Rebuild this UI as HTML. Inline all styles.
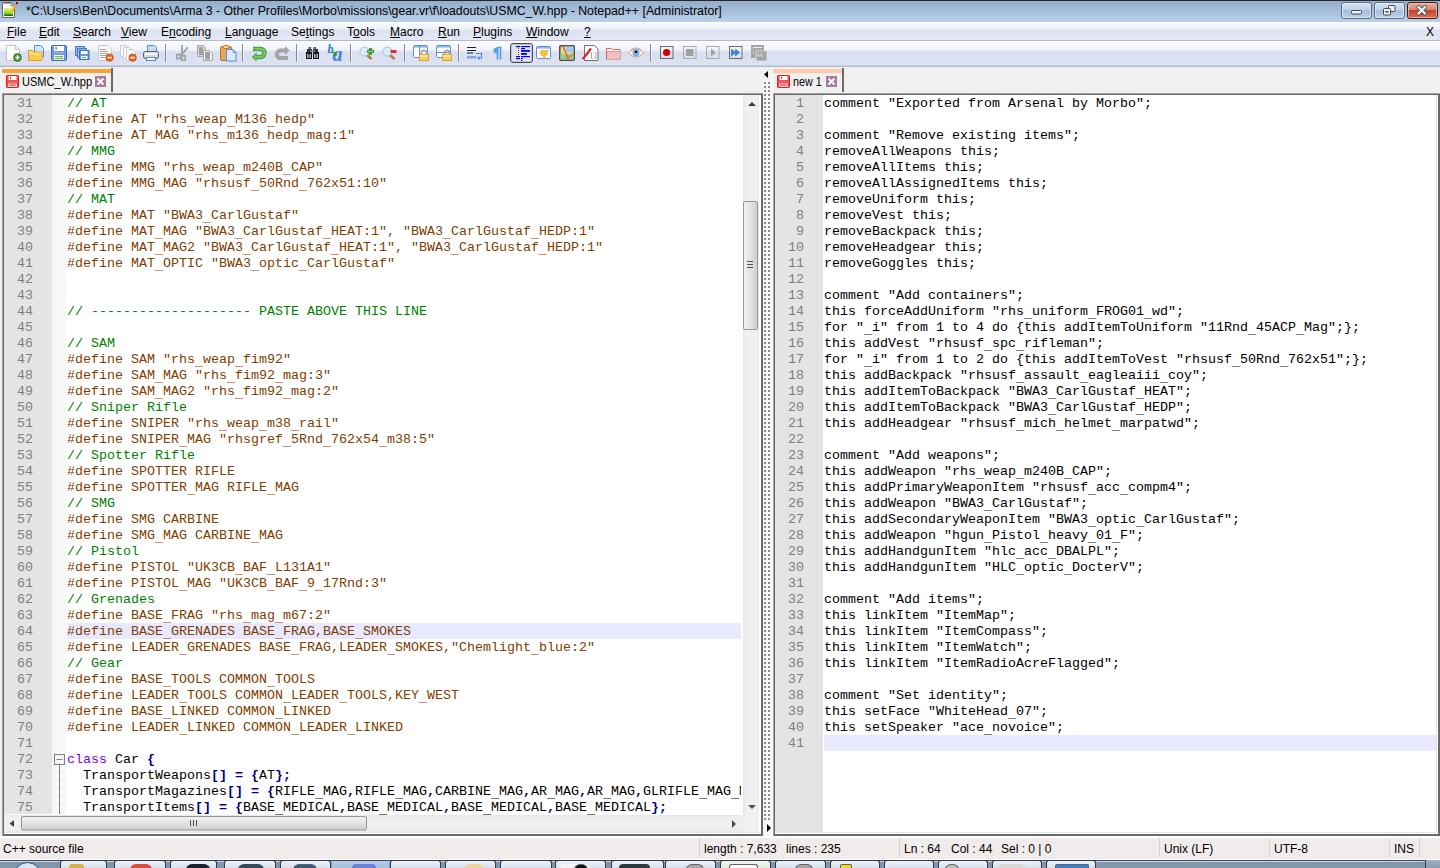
<!DOCTYPE html>
<html><head><meta charset="utf-8"><style>
*{margin:0;padding:0;box-sizing:border-box}
html,body{width:1440px;height:868px;overflow:hidden;background:#f0f0f0;position:relative;font-family:"Liberation Sans",sans-serif}
.a{position:absolute}
#title{left:0;top:0;width:1440px;height:22px;background:linear-gradient(#262626 0,#262626 1px,#93adca 1px,#b9d0e8 22px)}
#ttext{left:26px;top:4px;font-size:12.3px;color:#000;white-space:nowrap}
#menubar{left:0;top:22px;width:1440px;height:19px;background:linear-gradient(#fbfcfe 0,#eef1f9 7px,#dde2f1 8px,#e4e8f4 18px,#b4bacb 18px)}
.mi{position:absolute;top:3px;font-size:12px;color:#000;white-space:nowrap}
.mi u{text-decoration:underline;text-underline-offset:1px}
#toolbar{left:0;top:41px;width:1440px;height:26px;background:linear-gradient(#fbfcfe 0,#f1f3fa 9px,#d9dff0 11px,#dde2f2 24px,#b4bacb 25px)}
#tabbar{left:0;top:67px;width:1440px;height:28px;background:#f0f0f0}
.ln{position:absolute;width:29px;text-align:right;font-family:"Liberation Mono",monospace;font-size:13.333px;line-height:16px;height:16px;color:#808080;white-space:pre}
.tl{position:absolute;left:67px;font-family:"Liberation Mono",monospace;font-size:13.333px;line-height:16px;height:16px;white-space:pre;color:#000}
.tr{position:absolute;left:824px;font-family:"Liberation Mono",monospace;font-size:13.333px;line-height:16px;height:16px;white-space:pre;color:#000}
.u{position:relative;top:2px} .p{color:#804000} .c{color:#008000} .k{color:#8000ff} .o{color:#000080;font-weight:bold} .d{color:#000}
#status{left:0;top:836px;width:1440px;height:24px;background:linear-gradient(#fff 0,#fff 2px,#f0eceb 2px,#f0eceb 23px,#fff 23px)}
.st{position:absolute;top:6px;font-size:12px;color:#000;white-space:nowrap}
.sd{position:absolute;top:2px;width:1px;height:19px;background:#d6d2d0}
.tab{position:absolute;font-size:12px;color:#000;white-space:nowrap}
</style></head><body>
<div id="title" class="a"></div>
<div id="ttext" class="a">*C:\Users\Ben\Documents\Arma 3 - Other Profiles\Morbo\missions\gear.vr\f\loadouts\USMC_W.hpp - Notepad++ [Administrator]</div>
<div id="menubar" class="a"><div class="mi" style="left:7px"><u>F</u>ile</div>
<div class="mi" style="left:39px"><u>E</u>dit</div>
<div class="mi" style="left:73px"><u>S</u>earch</div>
<div class="mi" style="left:121px"><u>V</u>iew</div>
<div class="mi" style="left:161px">E<u>n</u>coding</div>
<div class="mi" style="left:225px"><u>L</u>anguage</div>
<div class="mi" style="left:291px">Se<u>t</u>tings</div>
<div class="mi" style="left:347px">T<u>o</u>ols</div>
<div class="mi" style="left:390px"><u>M</u>acro</div>
<div class="mi" style="left:438px"><u>R</u>un</div>
<div class="mi" style="left:473px"><u>P</u>lugins</div>
<div class="mi" style="left:526px"><u>W</u>indow</div>
<div class="mi" style="left:584px"><u>?</u></div><div class="mi" style="left:1426px">X</div></div>
<div id="toolbar" class="a"></div>
<div id="tabbar" class="a"></div>
<!-- tabs -->
<div class="a" style="left:1px;top:68px;width:111px;height:25px;background:#f0f0f0;border-left:1px solid #fff"></div>
<div class="a" style="left:2px;top:69px;width:109px;height:4px;background:#f9a330"></div>
<div class="a" style="left:111px;top:68px;width:2px;height:24px;background:#6a6a6a"></div>
<div class="tab" style="left:22px;top:75px;font-size:12.5px;transform-origin:0 0;transform:scaleX(0.885)">USMC_W.hpp</div>
<div class="a" style="left:772px;top:68px;width:72px;height:25px;background:#f0f0f0;border-left:1px solid #fff"></div>
<div class="a" style="left:773px;top:69px;width:70px;height:4px;background:#ffc8a6"></div>
<div class="a" style="left:842px;top:68px;width:2px;height:24px;background:#6a6a6a"></div>
<div class="tab" style="left:793px;top:75px;font-size:12.5px;transform-origin:0 0;transform:scaleX(0.86)">new 1</div>
<!-- left editor -->
<div class="a" style="left:2px;top:93px;width:761px;height:743px;background:#696969;border-top:1px solid #a0a0a0;border-left:1px solid #a0a0a0"></div>
<div class="a" style="left:4px;top:95px;width:757px;height:739px;background:#fff;border-right:2px solid #fff;border-bottom:2px solid #fff"></div>
<div class="a" style="left:4px;top:832px;width:756px;height:1px;background:#e3e3e3"></div>
<div class="a" style="left:4px;top:95px;width:48px;height:719px;background:#e4e4e4"></div>
<div class="a" style="left:52px;top:95px;width:14px;height:719px;background:repeating-conic-gradient(#f0f0f0 0 25%,#fff 0 50%) 0 0/2px 2px"></div>
<div class="a" style="left:67px;top:623px;width:674px;height:16px;background:#e8e8ff"></div>
<svg class="a" style="left:52px;top:750px" width="14" height="64" viewBox="52 750 14 64"><rect x="54.5" y="754.5" width="10" height="10" fill="#f4f4f4" stroke="#808080"/><path d="M56.5 759.5h6" stroke="#808080"/><path d="M59.5 765v50" stroke="#808080"/></svg>
<div style="position:absolute;left:0;top:0;width:741px;height:815px;overflow:hidden">
<div class="ln" style="top:96px;left:4px">31</div>
<div class="tl" style="top:96px"><span class="c">// AT</span></div>
<div class="ln" style="top:112px;left:4px">32</div>
<div class="tl" style="top:112px"><span class="p">#define AT "rhs<span class="u">_</span>weap<span class="u">_</span>M136<span class="u">_</span>hedp"</span></div>
<div class="ln" style="top:128px;left:4px">33</div>
<div class="tl" style="top:128px"><span class="p">#define AT<span class="u">_</span>MAG "rhs<span class="u">_</span>m136<span class="u">_</span>hedp<span class="u">_</span>mag:1"</span></div>
<div class="ln" style="top:144px;left:4px">34</div>
<div class="tl" style="top:144px"><span class="c">// MMG</span></div>
<div class="ln" style="top:160px;left:4px">35</div>
<div class="tl" style="top:160px"><span class="p">#define MMG "rhs<span class="u">_</span>weap<span class="u">_</span>m240B<span class="u">_</span>CAP"</span></div>
<div class="ln" style="top:176px;left:4px">36</div>
<div class="tl" style="top:176px"><span class="p">#define MMG<span class="u">_</span>MAG "rhsusf<span class="u">_</span>50Rnd<span class="u">_</span>762x51:10"</span></div>
<div class="ln" style="top:192px;left:4px">37</div>
<div class="tl" style="top:192px"><span class="c">// MAT</span></div>
<div class="ln" style="top:208px;left:4px">38</div>
<div class="tl" style="top:208px"><span class="p">#define MAT "BWA3<span class="u">_</span>CarlGustaf"</span></div>
<div class="ln" style="top:224px;left:4px">39</div>
<div class="tl" style="top:224px"><span class="p">#define MAT<span class="u">_</span>MAG "BWA3<span class="u">_</span>CarlGustaf<span class="u">_</span>HEAT:1", "BWA3<span class="u">_</span>CarlGustaf<span class="u">_</span>HEDP:1"</span></div>
<div class="ln" style="top:240px;left:4px">40</div>
<div class="tl" style="top:240px"><span class="p">#define MAT<span class="u">_</span>MAG2 "BWA3<span class="u">_</span>CarlGustaf<span class="u">_</span>HEAT:1", "BWA3<span class="u">_</span>CarlGustaf<span class="u">_</span>HEDP:1"</span></div>
<div class="ln" style="top:256px;left:4px">41</div>
<div class="tl" style="top:256px"><span class="p">#define MAT<span class="u">_</span>OPTIC "BWA3<span class="u">_</span>optic<span class="u">_</span>CarlGustaf"</span></div>
<div class="ln" style="top:272px;left:4px">42</div>
<div class="tl" style="top:272px"></div>
<div class="ln" style="top:288px;left:4px">43</div>
<div class="tl" style="top:288px"></div>
<div class="ln" style="top:304px;left:4px">44</div>
<div class="tl" style="top:304px"><span class="c">// -------------------- PASTE ABOVE THIS LINE</span></div>
<div class="ln" style="top:320px;left:4px">45</div>
<div class="tl" style="top:320px"></div>
<div class="ln" style="top:336px;left:4px">46</div>
<div class="tl" style="top:336px"><span class="c">// SAM</span></div>
<div class="ln" style="top:352px;left:4px">47</div>
<div class="tl" style="top:352px"><span class="p">#define SAM "rhs<span class="u">_</span>weap<span class="u">_</span>fim92"</span></div>
<div class="ln" style="top:368px;left:4px">48</div>
<div class="tl" style="top:368px"><span class="p">#define SAM<span class="u">_</span>MAG "rhs<span class="u">_</span>fim92<span class="u">_</span>mag:3"</span></div>
<div class="ln" style="top:384px;left:4px">49</div>
<div class="tl" style="top:384px"><span class="p">#define SAM<span class="u">_</span>MAG2 "rhs<span class="u">_</span>fim92<span class="u">_</span>mag:2"</span></div>
<div class="ln" style="top:400px;left:4px">50</div>
<div class="tl" style="top:400px"><span class="c">// Sniper Rifle</span></div>
<div class="ln" style="top:416px;left:4px">51</div>
<div class="tl" style="top:416px"><span class="p">#define SNIPER "rhs<span class="u">_</span>weap<span class="u">_</span>m38<span class="u">_</span>rail"</span></div>
<div class="ln" style="top:432px;left:4px">52</div>
<div class="tl" style="top:432px"><span class="p">#define SNIPER<span class="u">_</span>MAG "rhsgref<span class="u">_</span>5Rnd<span class="u">_</span>762x54<span class="u">_</span>m38:5"</span></div>
<div class="ln" style="top:448px;left:4px">53</div>
<div class="tl" style="top:448px"><span class="c">// Spotter Rifle</span></div>
<div class="ln" style="top:464px;left:4px">54</div>
<div class="tl" style="top:464px"><span class="p">#define SPOTTER RIFLE</span></div>
<div class="ln" style="top:480px;left:4px">55</div>
<div class="tl" style="top:480px"><span class="p">#define SPOTTER<span class="u">_</span>MAG RIFLE<span class="u">_</span>MAG</span></div>
<div class="ln" style="top:496px;left:4px">56</div>
<div class="tl" style="top:496px"><span class="c">// SMG</span></div>
<div class="ln" style="top:512px;left:4px">57</div>
<div class="tl" style="top:512px"><span class="p">#define SMG CARBINE</span></div>
<div class="ln" style="top:528px;left:4px">58</div>
<div class="tl" style="top:528px"><span class="p">#define SMG<span class="u">_</span>MAG CARBINE<span class="u">_</span>MAG</span></div>
<div class="ln" style="top:544px;left:4px">59</div>
<div class="tl" style="top:544px"><span class="c">// Pistol</span></div>
<div class="ln" style="top:560px;left:4px">60</div>
<div class="tl" style="top:560px"><span class="p">#define PISTOL "UK3CB<span class="u">_</span>BAF<span class="u">_</span>L131A1"</span></div>
<div class="ln" style="top:576px;left:4px">61</div>
<div class="tl" style="top:576px"><span class="p">#define PISTOL<span class="u">_</span>MAG "UK3CB<span class="u">_</span>BAF<span class="u">_</span>9<span class="u">_</span>17Rnd:3"</span></div>
<div class="ln" style="top:592px;left:4px">62</div>
<div class="tl" style="top:592px"><span class="c">// Grenades</span></div>
<div class="ln" style="top:608px;left:4px">63</div>
<div class="tl" style="top:608px"><span class="p">#define BASE<span class="u">_</span>FRAG "rhs<span class="u">_</span>mag<span class="u">_</span>m67:2"</span></div>
<div class="ln" style="top:624px;left:4px">64</div>
<div class="tl" style="top:624px"><span class="p">#define BASE<span class="u">_</span>GRENADES BASE<span class="u">_</span>FRAG,BASE<span class="u">_</span>SMOKES</span></div>
<div class="ln" style="top:640px;left:4px">65</div>
<div class="tl" style="top:640px"><span class="p">#define LEADER<span class="u">_</span>GRENADES BASE<span class="u">_</span>FRAG,LEADER<span class="u">_</span>SMOKES,"Chemlight<span class="u">_</span>blue:2"</span></div>
<div class="ln" style="top:656px;left:4px">66</div>
<div class="tl" style="top:656px"><span class="c">// Gear</span></div>
<div class="ln" style="top:672px;left:4px">67</div>
<div class="tl" style="top:672px"><span class="p">#define BASE<span class="u">_</span>TOOLS COMMON<span class="u">_</span>TOOLS</span></div>
<div class="ln" style="top:688px;left:4px">68</div>
<div class="tl" style="top:688px"><span class="p">#define LEADER<span class="u">_</span>TOOLS COMMON<span class="u">_</span>LEADER<span class="u">_</span>TOOLS,KEY<span class="u">_</span>WEST</span></div>
<div class="ln" style="top:704px;left:4px">69</div>
<div class="tl" style="top:704px"><span class="p">#define BASE<span class="u">_</span>LINKED COMMON<span class="u">_</span>LINKED</span></div>
<div class="ln" style="top:720px;left:4px">70</div>
<div class="tl" style="top:720px"><span class="p">#define LEADER<span class="u">_</span>LINKED COMMON<span class="u">_</span>LEADER<span class="u">_</span>LINKED</span></div>
<div class="ln" style="top:736px;left:4px">71</div>
<div class="tl" style="top:736px"></div>
<div class="ln" style="top:752px;left:4px">72</div>
<div class="tl" style="top:752px"><span class="k">class</span><span class="d"> Car </span><span class="o">{</span></div>
<div class="ln" style="top:768px;left:4px">73</div>
<div class="tl" style="top:768px"><span class="d">  TransportWeapons</span><span class="o">[]</span><span class="d"> </span><span class="o">=</span><span class="d"> </span><span class="o">{</span><span class="d">AT</span><span class="o">};</span></div>
<div class="ln" style="top:784px;left:4px">74</div>
<div class="tl" style="top:784px"><span class="d">  TransportMagazines</span><span class="o">[]</span><span class="d"> </span><span class="o">=</span><span class="d"> </span><span class="o">{</span><span class="d">RIFLE<span class="u">_</span>MAG</span><span class="o">,</span><span class="d">RIFLE<span class="u">_</span>MAG</span><span class="o">,</span><span class="d">CARBINE<span class="u">_</span>MAG</span><span class="o">,</span><span class="d">AR<span class="u">_</span>MAG</span><span class="o">,</span><span class="d">AR<span class="u">_</span>MAG</span><span class="o">,</span><span class="d">GLRIFLE<span class="u">_</span>MAG<span class="u">_</span>MEDICAL</span></div>
<div class="ln" style="top:800px;left:4px">75</div>
<div class="tl" style="top:800px"><span class="d">  TransportItems</span><span class="o">[]</span><span class="d"> </span><span class="o">=</span><span class="d"> </span><span class="o">{</span><span class="d">BASE<span class="u">_</span>MEDICAL</span><span class="o">,</span><span class="d">BASE<span class="u">_</span>MEDICAL</span><span class="o">,</span><span class="d">BASE<span class="u">_</span>MEDICAL</span><span class="o">,</span><span class="d">BASE<span class="u">_</span>MEDICAL</span><span class="o">};</span></div>
</div>
<!-- left vscroll -->
<div class="a" style="left:743px;top:95px;width:17px;height:719px;background:linear-gradient(90deg,#e6e6e6,#f0f0f0 3px,#f0f0f0 14px,#e8e8e8 16px,#fff 16px)"></div>
<svg class="a" style="left:743px;top:95px" width="18" height="719" viewBox="743 95 18 719">
<path d="M748 106h8l-4-4z" fill="#3a3a3a"/>
<path d="M748 805h8l-4 4z" fill="#505050"/>
<rect x="743.5" y="201.5" width="14" height="128" rx="1.5" fill="url(#thv)" stroke="#979797"/>
<defs><linearGradient id="thv" x1="0" x2="1" y1="0" y2="0"><stop offset="0" stop-color="#f2f2f2"/><stop offset="0.5" stop-color="#e2e2e2"/><stop offset="1" stop-color="#cfcfcf"/></linearGradient>
<linearGradient id="thh" x1="0" x2="0" y1="0" y2="1"><stop offset="0" stop-color="#f2f2f2"/><stop offset="0.5" stop-color="#e2e2e2"/><stop offset="1" stop-color="#cfcfcf"/></linearGradient></defs>
<path d="M747 261.5h6M747 264.5h6M747 267.5h6" stroke="#505050"/>
</svg>
<!-- left hscroll -->
<div class="a" style="left:4px;top:815px;width:739px;height:17px;background:linear-gradient(#e6e6e6,#f0f0f0 3px,#f0f0f0 14px,#e8e8e8)"></div>
<div class="a" style="left:743px;top:814px;width:16px;height:18px;background:#f0f0f0"></div>
<svg class="a" style="left:4px;top:814px" width="739" height="20" viewBox="4 814 739 20">
<path d="M14 820v7l-4.5-3.5z" fill="#404040"/>
<path d="M732 820v8l4-4z" fill="#505050"/>
<rect x="21.5" y="816.5" width="345" height="13.5" rx="1.5" fill="url(#thh)" stroke="#979797"/>
<path d="M190.5 820v6M193.5 820v6M196.5 820v6" stroke="#505050"/>
</svg>
<!-- splitter -->
<div class="a" style="left:763px;top:80px;width:10px;height:757px;background:#f8f8f8"></div>
<svg class="a" style="left:763px;top:80px" width="10" height="744" viewBox="0 0 10 744"><defs><pattern id="dots" x="1" y="2" width="4" height="4" patternUnits="userSpaceOnUse"><rect width="2" height="2" fill="#8c8c8c"/></pattern></defs><rect x="1" y="2" width="6" height="740" fill="url(#dots)"/></svg>
<!-- right editor -->
<div class="a" style="left:773px;top:93px;width:667px;height:743px;background:#696969;border-top:1px solid #a0a0a0;border-left:1px solid #a0a0a0"></div>
<div class="a" style="left:775px;top:95px;width:663px;height:739px;background:#fff"></div>
<div class="a" style="left:1436px;top:95px;width:1px;height:738px;background:#e3e3e3"></div>
<div class="a" style="left:775px;top:832px;width:662px;height:1px;background:#e3e3e3"></div>
<div class="a" style="left:775px;top:95px;width:48px;height:737px;background:#e4e4e4"></div>
<div class="a" style="left:824px;top:735px;width:612px;height:16px;background:#e8e8ff"></div>
<div class="ln" style="top:96px;left:775px">1</div>
<div class="tr" style="top:96px">comment "Exported from Arsenal by Morbo";</div>
<div class="ln" style="top:112px;left:775px">2</div>
<div class="tr" style="top:112px"></div>
<div class="ln" style="top:128px;left:775px">3</div>
<div class="tr" style="top:128px">comment "Remove existing items";</div>
<div class="ln" style="top:144px;left:775px">4</div>
<div class="tr" style="top:144px">removeAllWeapons this;</div>
<div class="ln" style="top:160px;left:775px">5</div>
<div class="tr" style="top:160px">removeAllItems this;</div>
<div class="ln" style="top:176px;left:775px">6</div>
<div class="tr" style="top:176px">removeAllAssignedItems this;</div>
<div class="ln" style="top:192px;left:775px">7</div>
<div class="tr" style="top:192px">removeUniform this;</div>
<div class="ln" style="top:208px;left:775px">8</div>
<div class="tr" style="top:208px">removeVest this;</div>
<div class="ln" style="top:224px;left:775px">9</div>
<div class="tr" style="top:224px">removeBackpack this;</div>
<div class="ln" style="top:240px;left:775px">10</div>
<div class="tr" style="top:240px">removeHeadgear this;</div>
<div class="ln" style="top:256px;left:775px">11</div>
<div class="tr" style="top:256px">removeGoggles this;</div>
<div class="ln" style="top:272px;left:775px">12</div>
<div class="tr" style="top:272px"></div>
<div class="ln" style="top:288px;left:775px">13</div>
<div class="tr" style="top:288px">comment "Add containers";</div>
<div class="ln" style="top:304px;left:775px">14</div>
<div class="tr" style="top:304px">this forceAddUniform "rhs<span class="u">_</span>uniform<span class="u">_</span>FROG01<span class="u">_</span>wd";</div>
<div class="ln" style="top:320px;left:775px">15</div>
<div class="tr" style="top:320px">for "<span class="u">_</span>i" from 1 to 4 do {this addItemToUniform "11Rnd<span class="u">_</span>45ACP<span class="u">_</span>Mag";};</div>
<div class="ln" style="top:336px;left:775px">16</div>
<div class="tr" style="top:336px">this addVest "rhsusf<span class="u">_</span>spc<span class="u">_</span>rifleman";</div>
<div class="ln" style="top:352px;left:775px">17</div>
<div class="tr" style="top:352px">for "<span class="u">_</span>i" from 1 to 2 do {this addItemToVest "rhsusf<span class="u">_</span>50Rnd<span class="u">_</span>762x51";};</div>
<div class="ln" style="top:368px;left:775px">18</div>
<div class="tr" style="top:368px">this addBackpack "rhsusf<span class="u">_</span>assault<span class="u">_</span>eagleaiii<span class="u">_</span>coy";</div>
<div class="ln" style="top:384px;left:775px">19</div>
<div class="tr" style="top:384px">this addItemToBackpack "BWA3<span class="u">_</span>CarlGustaf<span class="u">_</span>HEAT";</div>
<div class="ln" style="top:400px;left:775px">20</div>
<div class="tr" style="top:400px">this addItemToBackpack "BWA3<span class="u">_</span>CarlGustaf<span class="u">_</span>HEDP";</div>
<div class="ln" style="top:416px;left:775px">21</div>
<div class="tr" style="top:416px">this addHeadgear "rhsusf<span class="u">_</span>mich<span class="u">_</span>helmet<span class="u">_</span>marpatwd";</div>
<div class="ln" style="top:432px;left:775px">22</div>
<div class="tr" style="top:432px"></div>
<div class="ln" style="top:448px;left:775px">23</div>
<div class="tr" style="top:448px">comment "Add weapons";</div>
<div class="ln" style="top:464px;left:775px">24</div>
<div class="tr" style="top:464px">this addWeapon "rhs<span class="u">_</span>weap<span class="u">_</span>m240B<span class="u">_</span>CAP";</div>
<div class="ln" style="top:480px;left:775px">25</div>
<div class="tr" style="top:480px">this addPrimaryWeaponItem "rhsusf<span class="u">_</span>acc<span class="u">_</span>compm4";</div>
<div class="ln" style="top:496px;left:775px">26</div>
<div class="tr" style="top:496px">this addWeapon "BWA3<span class="u">_</span>CarlGustaf";</div>
<div class="ln" style="top:512px;left:775px">27</div>
<div class="tr" style="top:512px">this addSecondaryWeaponItem "BWA3<span class="u">_</span>optic<span class="u">_</span>CarlGustaf";</div>
<div class="ln" style="top:528px;left:775px">28</div>
<div class="tr" style="top:528px">this addWeapon "hgun<span class="u">_</span>Pistol<span class="u">_</span>heavy<span class="u">_</span>01<span class="u">_</span>F";</div>
<div class="ln" style="top:544px;left:775px">29</div>
<div class="tr" style="top:544px">this addHandgunItem "hlc<span class="u">_</span>acc<span class="u">_</span>DBALPL";</div>
<div class="ln" style="top:560px;left:775px">30</div>
<div class="tr" style="top:560px">this addHandgunItem "HLC<span class="u">_</span>optic<span class="u">_</span>DocterV";</div>
<div class="ln" style="top:576px;left:775px">31</div>
<div class="tr" style="top:576px"></div>
<div class="ln" style="top:592px;left:775px">32</div>
<div class="tr" style="top:592px">comment "Add items";</div>
<div class="ln" style="top:608px;left:775px">33</div>
<div class="tr" style="top:608px">this linkItem "ItemMap";</div>
<div class="ln" style="top:624px;left:775px">34</div>
<div class="tr" style="top:624px">this linkItem "ItemCompass";</div>
<div class="ln" style="top:640px;left:775px">35</div>
<div class="tr" style="top:640px">this linkItem "ItemWatch";</div>
<div class="ln" style="top:656px;left:775px">36</div>
<div class="tr" style="top:656px">this linkItem "ItemRadioAcreFlagged";</div>
<div class="ln" style="top:672px;left:775px">37</div>
<div class="tr" style="top:672px"></div>
<div class="ln" style="top:688px;left:775px">38</div>
<div class="tr" style="top:688px">comment "Set identity";</div>
<div class="ln" style="top:704px;left:775px">39</div>
<div class="tr" style="top:704px">this setFace "WhiteHead<span class="u">_</span>07";</div>
<div class="ln" style="top:720px;left:775px">40</div>
<div class="tr" style="top:720px">this setSpeaker "ace<span class="u">_</span>novoice";</div>
<div class="ln" style="top:736px;left:775px">41</div>
<div class="tr" style="top:736px"></div>
<svg class="a" style="left:0;top:0" width="800" height="70" viewBox="0 0 800 70" shape-rendering="geometricPrecision"><path d="M6.5 45.5h9l4 4v11h-13z" fill="#fdfdfd" stroke="#c4c4c4"/><path d="M15.5 45.5v4h4" fill="#eee" stroke="#c4c4c4"/>
<circle cx="17.5" cy="57.5" r="3.9" fill="#3f8f2f" stroke="#2c6e1f" stroke-width="0.8"/><path d="M15.3 57.5h4.4M17.5 55.3v4.4" stroke="#fff" stroke-width="1.5"/><path d="M34.5 45.5h6l3 3v8.5h-9z" fill="#d3e6fb" stroke="#4f8bd6"/>
<path d="M28.5 50.5h4l1 1.5h8.5v8.5h-13.5z" fill="#f9dc78" stroke="#e99a2c"/><rect x="29" y="55" width="12" height="5" fill="#f6cc4a"/><rect x="51.5" y="45.5" width="15" height="15" rx="1" fill="#6f98d8" stroke="#3a6cc0"/>
<rect x="54" y="46" width="10" height="5" fill="#fff"/><rect x="55.5" y="46.8" width="1.2" height="2.8" fill="#3a6cc0"/>
<rect x="53.5" y="52" width="11" height="1.5" fill="#8fb2e6"/><rect x="54" y="55" width="10" height="5" fill="#fff"/><rect x="55" y="56" width="8" height="1.2" fill="#6cbf4a"/><rect x="55" y="58" width="8" height="1.2" fill="#6cbf4a"/><rect x="75.5" y="46.5" width="9" height="9" fill="#9dbde9" stroke="#4a7ccc"/><rect x="77.5" y="48.5" width="9" height="9" fill="#9dbde9" stroke="#4a7ccc"/>
<rect x="79.5" y="50.5" width="9.5" height="9" fill="#6f98d8" stroke="#3a6cc0"/><rect x="81" y="51" width="6.5" height="3" fill="#fff"/><rect x="81" y="56" width="6.5" height="3" fill="#fff"/><rect x="82" y="57" width="4.5" height="1.2" fill="#6cbf4a"/><path d="M98.5 45.5h9l4 4v11h-13z" fill="#fdfdfd" stroke="#c8c8c8"/><path d="M100 49.5h6M100 51.5h8M100 53.5h8M100 55.5h6M100 57.5h5" stroke="#8a8a8a" stroke-width="0.8"/>
<circle cx="109.6" cy="57.6" r="3.7" fill="#e2651c" stroke="#c04a10" stroke-width="0.8"/><path d="M107.4 57.6h4.4" stroke="#fff" stroke-width="1.6"/><path d="M120.5 45.5h6l3 3v8h-9z" fill="#fafafa" stroke="#cfcfcf"/><path d="M123.5 47.5h6l3 3v8h-9z" fill="#fafafa" stroke="#cfcfcf"/><path d="M126.5 49.5h6l3 3v8h-9z" fill="#fdfdfd" stroke="#cfcfcf"/>
<circle cx="132.6" cy="57.6" r="3.7" fill="#e2651c" stroke="#c04a10" stroke-width="0.8"/><path d="M130.4 57.6h4.4" stroke="#fff" stroke-width="1.6"/><path d="M147.5 45.5h7l2 2v5h-9z" fill="#c9def8" stroke="#4f8bd6"/>
<rect x="143.5" y="51.5" width="15" height="7" rx="2" fill="#d8d8d8" stroke="#5a5a5a"/><rect x="145" y="53" width="12" height="2" fill="#f4f4f4"/>
<rect x="146.5" y="57.5" width="9" height="3" fill="#fff" stroke="#4f8bd6"/><rect x="165" y="44" width="1" height="18" fill="#868b96"/><rect x="166" y="44" width="1" height="18" fill="#fbfcfe" opacity="0.6"/><path d="M182 45v9.5" stroke="#a2a2a2" stroke-width="1.9"/><path d="M187.8 47.2l-5.5 6.8" stroke="#a2a2a2" stroke-width="1.9"/><rect x="176.75" y="54.75" width="3.5" height="3.8" fill="none" stroke="#a2a2a2" stroke-width="1.6"/><rect x="181.75" y="55.75" width="3.5" height="4.5" fill="none" stroke="#a2a2a2" stroke-width="1.6"/><path d="M178 54l5 1" stroke="#a2a2a2" stroke-width="1.6"/><path d="M197.5 45.5h6l2 2v9h-8z" fill="#d6d6d6" stroke="#a8a8a8"/><rect x="199" y="47" width="4" height="8" fill="#a0a0a0"/>
<path d="M203.5 50.5h6l3 3v7h-9z" fill="#f0f0f0" stroke="#a8a8a8"/><rect x="205" y="52" width="5" height="7.5" fill="#a0a0a0"/><rect x="220.5" y="46.5" width="11" height="14" rx="1.5" fill="#e6a858" stroke="#b87428"/><rect x="223.5" y="45.5" width="5" height="3" rx="1" fill="#f6d88a" stroke="#b87428"/>
<path d="M226.5 49.5h6.5l3 3v8.5h-9.5z" fill="#dcebfc" stroke="#4f8bd6"/><path d="M233 49.5v3h3" fill="none" stroke="#4f8bd6" stroke-width="0.8"/><rect x="242" y="44" width="1" height="18" fill="#868b96"/><rect x="243" y="44" width="1" height="18" fill="#fbfcfe" opacity="0.6"/><path d="M253 49h7.5a4 4 0 0 1 0 8H256" fill="none" stroke="#3a9a30" stroke-width="4.4"/><path d="M252 57l4.5-4.5v9z" fill="#3a9a30"/><path d="M253.5 49h7a4 4 0 0 1 0 8H256" fill="none" stroke="#74c864" stroke-width="2.4"/><path d="M253.3 57l2.7-2.7v5.4z" fill="#74c864"/><path d="M285 50.5h-5.5a4 4 0 0 0 0 7.5H288" fill="none" stroke="#a4a4a4" stroke-width="4"/><path d="M289.5 50.5l-4.5-4.5v9z" fill="#a4a4a4"/><rect x="296" y="44" width="1" height="18" fill="#868b96"/><rect x="297" y="44" width="1" height="18" fill="#fbfcfe" opacity="0.6"/><rect x="306" y="52" width="6" height="7" fill="#141414"/><rect x="313" y="52" width="6" height="7" fill="#141414"/><rect x="307" y="54" width="4" height="4" fill="#a8b2b6"/><rect x="314" y="54" width="4" height="4" fill="#a8b2b6"/><rect x="308.5" y="54" width="1" height="4" fill="#303030"/><rect x="315.5" y="54" width="1" height="4" fill="#303030"/>
<rect x="307" y="49" width="5" height="3.5" fill="#2c3438"/><rect x="313" y="49" width="5" height="3.5" fill="#2c3438"/><rect x="308.5" y="47" width="2.5" height="2.5" fill="#52606a"/><rect x="313.5" y="47" width="2.5" height="2.5" fill="#52606a"/><rect x="310" y="50.5" width="5" height="1.6" fill="#6a88a8"/><text x="327.5" y="53" font-family="Liberation Serif" font-style="italic" font-weight="bold" font-size="12" fill="#2a78e0">b</text><text x="332.5" y="60.5" font-family="Liberation Serif" font-style="italic" font-weight="bold" font-size="20" fill="#3a88e8">a</text><path d="M332.5 51.5l3.5 3.5" stroke="#4aa838" stroke-width="2"/><path d="M333 56l4-0.5-0.5-4z" fill="#2e8a28"/><rect x="350" y="44" width="1" height="18" fill="#868b96"/><rect x="351" y="44" width="1" height="18" fill="#fbfcfe" opacity="0.6"/><path d="M367 55l4.5 4" stroke="#b07d3e" stroke-width="2.6"/><circle cx="364.5" cy="51.5" r="4.5" fill="#dcecfb" stroke="#9cc2e8"/><rect x="367" y="50" width="7" height="3" fill="#3f9a2f"/><rect x="369" y="48" width="3" height="7" fill="#3f9a2f"/><rect x="368" y="51" width="5" height="1" fill="#8fd070"/><path d="M390 55l4.5 4" stroke="#b07d3e" stroke-width="2.6"/><circle cx="387.5" cy="51.5" r="4.5" fill="#dcecfb" stroke="#9cc2e8"/><rect x="390.5" y="50" width="6" height="3" fill="#e03030"/><rect x="404" y="44" width="1" height="18" fill="#868b96"/><rect x="405" y="44" width="1" height="18" fill="#fbfcfe" opacity="0.6"/><rect x="413.5" y="45.5" width="14" height="12" rx="1" fill="#fff" stroke="#5b8ed4"/><rect x="414" y="46" width="13" height="1.6" fill="#8db6ea"/><path d="M419.5 46v11" stroke="#5b8ed4"/>
<path d="M421.3 54.5v-1.5a2.7 2.7 0 0 1 5.4 0v1.5" fill="none" stroke="#a6a6a6" stroke-width="1.8"/><rect x="419.5" y="54.5" width="9" height="6" fill="#f6d060" stroke="#e0a030"/><rect x="420" y="55" width="8" height="2" fill="#fbe8a0"/><rect x="436.5" y="45.5" width="14" height="12" rx="1" fill="#fff" stroke="#5b8ed4"/><rect x="437" y="46" width="13" height="1.6" fill="#8db6ea"/><path d="M437 52.5h13" stroke="#5b8ed4"/>
<path d="M444.3 54.5v-1.5a2.7 2.7 0 0 1 5.4 0v1.5" fill="none" stroke="#a6a6a6" stroke-width="1.8"/><rect x="442.5" y="54.5" width="9" height="6" fill="#f6d060" stroke="#e0a030"/><rect x="443" y="55" width="8" height="2" fill="#fbe8a0"/><rect x="458" y="44" width="1" height="18" fill="#868b96"/><rect x="459" y="44" width="1" height="18" fill="#fbfcfe" opacity="0.6"/><path d="M467 47.5h9M467 50.5h9M467 53h6" stroke="#222" stroke-width="1.1"/><path d="M476 53.5h5.5v4.5h-4" fill="none" stroke="#4a86d0" stroke-width="1.1"/><rect x="467" y="56" width="9" height="2.5" fill="#7aaae4"/><path d="M479.5 56l-2.5 2 2.5 2z" fill="#4a86d0"/><path d="M497 47.5h4.5M497.5 47.5v12M500.5 47.5v12" stroke="#58a0ec" stroke-width="1.6"/><path d="M497 47.5a3 3 0 0 0 0 6z" fill="#58a0ec"/><circle cx="496" cy="50.5" r="2.6" fill="#58a0ec"/><rect x="510.5" y="43.5" width="22" height="19" rx="2.5" fill="#dfe3ee" stroke="#4a4a4a" stroke-width="1"/><rect x="511.5" y="44.5" width="20" height="17" rx="2" fill="none" stroke="#b8bcc8" stroke-width="0.8"/>
<rect x="516" y="46" width="4" height="1.2" fill="#0000ff"/><rect x="521" y="46" width="9" height="1.2" fill="#0000ff"/><rect x="521" y="48" width="4" height="1.2" fill="#0000ff"/><rect x="521" y="50" width="9" height="1.8" fill="#0000ff"/><rect x="521" y="53" width="6" height="1.8" fill="#0000ff"/><rect x="516" y="56" width="4" height="1.2" fill="#0000ff"/><rect x="521" y="56" width="9" height="1.2" fill="#0000ff"/><rect x="516" y="58" width="4" height="1.2" fill="#0000ff"/><rect x="521" y="58" width="2" height="1.2" fill="#0000ff"/><rect x="521" y="60" width="1.2" height="1" fill="#0000ff"/>
<rect x="518" y="48" width="0.9" height="1" fill="#e00"/><rect x="518" y="50" width="0.9" height="1" fill="#e00"/><rect x="518" y="52" width="0.9" height="1" fill="#e00"/><rect x="518" y="54" width="0.9" height="1" fill="#e00"/><rect x="536.5" y="46.5" width="14" height="12" rx="1" fill="#fff" stroke="#5b8ed4"/><rect x="537" y="47" width="13" height="1.6" fill="#8db6ea"/><path d="M541 50.5h8l-3.5 3h2.5l-5.5 6.5 1.5-4.5h-3.5l2-2h-3z" fill="#f2c53a" stroke="#e0a020" stroke-width="0.5"/><rect x="559.75" y="45.75" width="14.5" height="14.5" rx="1" fill="#dfe07a" stroke="#4a4a60" stroke-width="1.5"/><rect x="566" y="46.5" width="7.5" height="6" fill="#9ec8ee"/><rect x="560.5" y="54" width="13" height="5.5" fill="#8ed080"/><path d="M563 46.5l5.5 12.5" stroke="#e84848" stroke-width="1.2"/><path d="M573.5 54l-7.5 5" stroke="#f07030" stroke-width="1.2"/><path d="M584.5 45.5h10l3.5 3.5v11.5h-13.5z" fill="#fff" stroke="#6e6e6e"/><path d="M582.5 59l2.5-2.5M585 56.5l6-8" stroke="#e82020" stroke-width="2.2" fill="none"/><path d="M592.5 52.5h-1v6h1M595 52.5h1v6h-1" stroke="#8aa0b8" stroke-width="0.9" fill="none"/><path d="M606.5 48.5h5l1 1h7.5v9.5h-13.5z" fill="#fff" stroke="#d86464"/><path d="M607 52l4-0.5h9v7h-13z" fill="#f2c0c0"/><rect x="607" y="51" width="12.5" height="1" fill="#e89a9a"/><path d="M628.5 53q7.5-8.5 15 0q-7.5 8-15 0z" fill="#fff" stroke="#e8a060" stroke-width="1"/><path d="M630.5 50q5.5-4 11 0" stroke="#b8b8b8" fill="none" stroke-width="1.2"/><circle cx="636" cy="52.8" r="3.6" fill="#7aaee8"/><circle cx="636" cy="51.8" r="1.3" fill="#101020"/><rect x="650" y="44" width="1" height="18" fill="#868b96"/><rect x="651" y="44" width="1" height="18" fill="#fbfcfe" opacity="0.6"/><rect x="660.5" y="46.5" width="12.5" height="12" fill="none" stroke="#6a6a6a"/><circle cx="666.6" cy="52.5" r="3.6" fill="#d00000"/><rect x="683.5" y="46.5" width="12.5" height="12" fill="none" stroke="#a8a8a8"/><rect x="686" y="49" width="7.5" height="7" fill="#a0a0a0"/><rect x="706.5" y="46.5" width="12.5" height="12" fill="none" stroke="#a8a8a8"/><path d="M711 48.5l5 4-5 4z" fill="#a0a0a0"/><rect x="729.5" y="46.5" width="12.5" height="12" fill="none" stroke="#6a6a6a"/><path d="M731.5 49l4 3.5-4 3.5zM735.5 49l4 3.5-4 3.5z" fill="#3a80e8" stroke="#2a60c0" stroke-width="0.5"/><rect x="751" y="45" width="13" height="13" fill="#a6a6a6"/><rect x="753" y="47" width="9" height="1" fill="#eee"/><rect x="753" y="49" width="1" height="1" fill="#ddd"/><rect x="753" y="51" width="1" height="1" fill="#ddd"/><rect x="753" y="53" width="1" height="1" fill="#ddd"/><rect x="756" y="51" width="11" height="10" fill="#a6a6a6" stroke="#f0f0f0" stroke-width="0.6"/><path d="M758 53v3h2M761 53v3h2" stroke="#eee" stroke-width="0.8" fill="none"/></svg><svg class="a" style="left:0;top:0" width="24" height="22" viewBox="0 0 24 22">
<defs><linearGradient id="tig" x1="0" y1="0" x2="0" y2="1"><stop offset="0" stop-color="#f0f070"/><stop offset="0.5" stop-color="#a8e040"/><stop offset="0.85" stop-color="#30b020"/><stop offset="1" stop-color="#005000"/></linearGradient></defs>
<path d="M2.5 2.5h9l3 3v12h-12z" fill="#fff" stroke="#626262"/><path d="M11 2.5v3.5h3.5" fill="#eee" stroke="#626262" stroke-width="0.8"/>
<path d="M4.5 3.5h1M6.5 3.5h1M8.5 3.5h1" stroke="#555" stroke-width="1"/>
<rect x="4" y="8" width="9" height="8" fill="url(#tig)"/>
<path d="M10.5 14.5l5-9" stroke="#e89a10" stroke-width="2.2"/><path d="M10.6 14l4.6-8.3" stroke="#ffd040" stroke-width="0.9"/>
<path d="M9.8 15.2l0.9-1.2" stroke="#333" stroke-width="1"/>
<path d="M15.7 5l0.7-1.3" stroke="#7090b0" stroke-width="1"/>
<rect x="16" y="2" width="2" height="2" fill="#b00000"/></svg><svg class="a" style="left:1338;top:0" width="102" height="22" viewBox="1338 0 102 22">
<defs>
<linearGradient id="gb" x1="0" y1="0" x2="0" y2="1"><stop offset="0" stop-color="#d4e3f3"/><stop offset="0.45" stop-color="#bed3ea"/><stop offset="0.5" stop-color="#a3bfdc"/><stop offset="1" stop-color="#b9d2ec"/></linearGradient>
<linearGradient id="gr" x1="0" y1="0" x2="0" y2="1"><stop offset="0" stop-color="#eab0a0"/><stop offset="0.45" stop-color="#d98672"/><stop offset="0.5" stop-color="#c44328"/><stop offset="1" stop-color="#d8735a"/></linearGradient>
</defs>
<rect x="1341.5" y="2.5" width="30" height="16" rx="2.5" fill="url(#gb)" stroke="#5d6e88"/>
<rect x="1342.5" y="3.5" width="28" height="14" rx="2" fill="none" stroke="#e8f0f8" stroke-opacity="0.7"/>
<rect x="1351.5" y="10.5" width="10" height="3.5" rx="1" fill="#f0f0f0" stroke="#454a55"/>
<rect x="1374.5" y="2.5" width="30" height="16" rx="2.5" fill="url(#gb)" stroke="#5d6e88"/>
<rect x="1375.5" y="3.5" width="28" height="14" rx="2" fill="none" stroke="#e8f0f8" stroke-opacity="0.7"/>
<rect x="1388.5" y="5.5" width="6.5" height="6" rx="0.8" fill="#f0f0f0" stroke="#454a55"/>
<rect x="1383.5" y="8.5" width="7" height="6.5" rx="0.8" fill="#f0f0f0" stroke="#454a55"/><rect x="1385.5" y="11" width="3" height="1.6" fill="#454a55"/>
<rect x="1407.5" y="2.5" width="30" height="16" rx="2.5" fill="url(#gr)" stroke="#4a1616"/>
<rect x="1408.5" y="3.5" width="28" height="14" rx="2" fill="none" stroke="#f4c8bc" stroke-opacity="0.7"/>
<path d="M1418.5 7l6.5 6.5M1425 7l-6.5 6.5" stroke="#4a5060" stroke-width="4" stroke-linecap="round"/>
<path d="M1418.5 7l6.5 6.5M1425 7l-6.5 6.5" stroke="#f4f4f4" stroke-width="2.4" stroke-linecap="round"/>
</svg><svg class="a" style="left:0;top:64px" width="860" height="32" viewBox="0 64 860 32">
<rect x="6.5" y="75.5" width="12" height="12" rx="0.8" fill="#f04848" stroke="#e41c1c"/><rect x="8.5" y="76" width="8" height="4" fill="#fff"/><rect x="10" y="76.5" width="1.2" height="2.5" fill="#e84040"/><rect x="7.5" y="80.5" width="10" height="2.5" fill="#f45a5a"/><rect x="8" y="83.5" width="9" height="3.5" fill="#fbd8d8"/><rect x="9" y="84.3" width="6.5" height="1.6" fill="#e46464"/><rect x="95" y="76" width="11" height="11" fill="#a57b98"/><path d="M97.5 78.5l6 6M103.5 78.5l-6 6" stroke="#fff" stroke-width="2"/><rect x="777.5" y="75.5" width="12" height="12" rx="0.8" fill="#f04848" stroke="#e41c1c"/><rect x="779.5" y="76" width="8" height="4" fill="#fff"/><rect x="781" y="76.5" width="1.2" height="2.5" fill="#e84040"/><rect x="778.5" y="80.5" width="10" height="2.5" fill="#f45a5a"/><rect x="779" y="83.5" width="9" height="3.5" fill="#fbd8d8"/><rect x="780" y="84.3" width="6.5" height="1.6" fill="#e46464"/><rect x="826" y="76" width="11" height="11" fill="#a57b98"/><path d="M828.5 78.5l6 6M834.5 78.5l-6 6" stroke="#fff" stroke-width="2"/>
<path d="M768 71v7l-4-3.5z" fill="#000"/>
</svg>
<svg class="a" style="left:763px;top:820px" width="10" height="16" viewBox="763 820 10 16"><path d="M767 824v8l4-4z" fill="#000"/></svg>
<div id="status" class="a">
<div class="st" style="left:3px">C++ source file</div>
<div class="sd" style="left:699px"></div>
<div class="st" style="left:704px">length : 7,633</div>
<div class="st" style="left:786px">lines : 235</div>
<div class="sd" style="left:899px"></div>
<div class="st" style="left:904px">Ln : 64</div>
<div class="st" style="left:951px">Col : 44</div>
<div class="st" style="left:1001px">Sel : 0 | 0</div>
<div class="sd" style="left:1159px"></div>
<div class="st" style="left:1164px">Unix (LF)</div>
<div class="sd" style="left:1269px"></div>
<div class="st" style="left:1274px">UTF-8</div>
<div class="sd" style="left:1389px"></div>
<div class="st" style="left:1394px">INS</div>
<div class="sd" style="left:1419px"></div>
</div>
<div class="a" style="left:0;top:860px;width:1440px;height:1px;background:#3a4555"></div>
<div class="a" style="left:0;top:861px;width:1440px;height:7px;background:linear-gradient(#c8d8e8 0,#c8d8e8 1px,#8294aa 1px,#8296ac)"></div>
<div class="a" style="left:13px;top:862px;width:29px;height:29px;border-radius:50%;border:1.5px solid #20508a;background:radial-gradient(circle at 50% 20%,#e8f0f8,#9ab8d8)"></div>
<div class="a" style="left:60px;top:860px;width:47px;height:10px;border-radius:3px 3px 0 0;border:1px solid #2e3a48;border-bottom:none;background:linear-gradient(#eef3f8,#cfdbe8)"></div>
<div class="a" style="left:114px;top:860px;width:52px;height:10px;border-radius:3px 3px 0 0;border:1px solid #2e3a48;border-bottom:none;background:linear-gradient(#eef3f8,#cfdbe8)"></div>
<div class="a" style="left:170px;top:860px;width:47px;height:10px;border-radius:3px 3px 0 0;border:1px solid #2e3a48;border-bottom:none;background:linear-gradient(#eef3f8,#cfdbe8)"></div>
<div class="a" style="left:224px;top:860px;width:52px;height:10px;border-radius:3px 3px 0 0;border:1px solid #2e3a48;border-bottom:none;background:linear-gradient(#eef3f8,#cfdbe8)"></div>
<div class="a" style="left:280px;top:860px;width:51px;height:10px;border-radius:3px 3px 0 0;border:1px solid #2e3a48;border-bottom:none;background:linear-gradient(#eef3f8,#cfdbe8)"></div>
<div class="a" style="left:332px;top:861px;width:57px;height:7px;background:linear-gradient(#b4cbe3,#a6c0dc)"></div>
<div class="a" style="left:390px;top:860px;width:51px;height:10px;border-radius:3px 3px 0 0;border:1px solid #2e3a48;border-bottom:none;background:linear-gradient(#eef3f8,#cfdbe8)"></div>
<div class="a" style="left:445px;top:860px;width:51px;height:10px;border-radius:3px 3px 0 0;border:1px solid #2e3a48;border-bottom:none;background:linear-gradient(#eef3f8,#cfdbe8)"></div>
<div class="a" style="left:500px;top:860px;width:52px;height:10px;border-radius:3px 3px 0 0;border:1px solid #2e3a48;border-bottom:none;background:linear-gradient(#eef3f8,#cfdbe8)"></div>
<div class="a" style="left:555px;top:860px;width:51px;height:10px;border-radius:3px 3px 0 0;border:1px solid #2e3a48;border-bottom:none;background:linear-gradient(#eef3f8,#cfdbe8)"></div>
<div class="a" style="left:611px;top:860px;width:53px;height:10px;border-radius:3px 3px 0 0;border:1px solid #2e3a48;border-bottom:none;background:linear-gradient(#eef3f8,#cfdbe8)"></div>
<div class="a" style="left:665px;top:860px;width:51px;height:10px;border-radius:3px 3px 0 0;border:1px solid #2e3a48;border-bottom:none;background:linear-gradient(#eef3f8,#cfdbe8)"></div>
<div class="a" style="left:720px;top:860px;width:51px;height:10px;border-radius:3px 3px 0 0;border:1px solid #2e3a48;border-bottom:none;background:linear-gradient(#f4f8f0,#d8e6d8)"></div>
<div class="a" style="left:775px;top:860px;width:51px;height:10px;border-radius:3px 3px 0 0;border:1px solid #2e3a48;border-bottom:none;background:linear-gradient(#eef3f8,#cfdbe8)"></div>
<div class="a" style="left:830px;top:860px;width:50px;height:10px;border-radius:3px 3px 0 0;border:1px solid #2e3a48;border-bottom:none;background:linear-gradient(#eef3f8,#cfdbe8)"></div>
<div class="a" style="left:884px;top:860px;width:50px;height:10px;border-radius:3px 3px 0 0;border:1px solid #2e3a48;border-bottom:none;background:linear-gradient(#eef3f8,#cfdbe8)"></div>
<div class="a" style="left:938px;top:860px;width:50px;height:10px;border-radius:3px 3px 0 0;border:1px solid #2e3a48;border-bottom:none;background:linear-gradient(#eef3f8,#cfdbe8)"></div>
<div class="a" style="left:992px;top:860px;width:50px;height:10px;border-radius:3px 3px 0 0;border:1px solid #2e3a48;border-bottom:none;background:linear-gradient(#eef3f8,#cfdbe8)"></div>
<div class="a" style="left:1046px;top:860px;width:50px;height:10px;border-radius:3px 3px 0 0;border:1px solid #2e3a48;border-bottom:none;background:linear-gradient(#eef3f8,#cfdbe8)"></div>
<div class="a" style="left:1425px;top:860px;width:15px;height:8px;background:linear-gradient(#a0b0c2,#8a9cb0);border-left:1px solid #2e3a48"></div>
<div class="a" style="left:69px;top:864px;width:15px;height:6px;border-radius:3px 3px 0 0;background:#d8b048"></div>
<div class="a" style="left:130px;top:864px;width:22px;height:6px;border-radius:11px 11px 0 0;background:#e04a38"></div>
<div class="a" style="left:186px;top:864px;width:24px;height:6px;border-radius:12px 12px 0 0;background:#18222c"></div>
<div class="a" style="left:238px;top:864px;width:26px;height:6px;border-radius:13px 13px 0 0;background:#38495a"></div>
<div class="a" style="left:293px;top:864px;width:24px;height:6px;border-radius:12px 12px 0 0;border:1px solid #5a6470;border-bottom:none;background:#3a5a7a"></div>
<div class="a" style="left:352px;top:864px;width:24px;height:6px;border-radius:4px 4px 0 0;background:#6c82d8"></div>
<div class="a" style="left:464px;top:864px;width:20px;height:6px;border-radius:6px 6px 0 0;background:#e8d8a0"></div>
<div class="a" style="left:560px;top:864px;width:30px;height:6px;border-radius:4px 4px 0 0;background:#f4f4f4"></div>
<div class="a" style="left:574px;top:864px;width:14px;height:6px;border-radius:8px 8px 0 0;border:1px solid #5a6470;border-bottom:none;background:#101010"></div>
<div class="a" style="left:619px;top:864px;width:31px;height:6px;border-radius:4px 4px 0 0;background:#2c3a40"></div>
<div class="a" style="left:686px;top:864px;width:18px;height:6px;border-radius:9px 9px 0 0;border:1px solid #5a6470;border-bottom:none;background:#a8a8a8"></div>
<div class="a" style="left:729px;top:864px;width:29px;height:6px;border-radius:3px 3px 0 0;border:1px solid #5a6470;border-bottom:none;background:#ffffff"></div>
<div class="a" style="left:795px;top:864px;width:18px;height:6px;border-radius:9px 9px 0 0;border:1px solid #5a6470;border-bottom:none;background:#a8a8a8"></div>
<div class="a" style="left:840px;top:864px;width:12px;height:6px;border-radius:2px 2px 0 0;border:1px solid #5a6470;border-bottom:none;background:#f0e000"></div>
<div class="a" style="left:945px;top:864px;width:14px;height:6px;border-radius:7px 7px 0 0;border:1px solid #5a6470;border-bottom:none;background:#c0c0c0"></div>
<div class="a" style="left:996px;top:864px;width:30px;height:6px;border-radius:8px 8px 0 0;background:#d8d8d8"></div>
<div class="a" style="left:1072px;top:864px;width:10px;height:6px;border-radius:5px 5px 0 0;background:#f0b060"></div>
<div class="a" style="left:1055px;top:864px;width:34px;height:6px;border-radius:2px 2px 0 0;border:1px solid #5a6470;border-bottom:none;background:#3a80c8"></div>
</body></html>
